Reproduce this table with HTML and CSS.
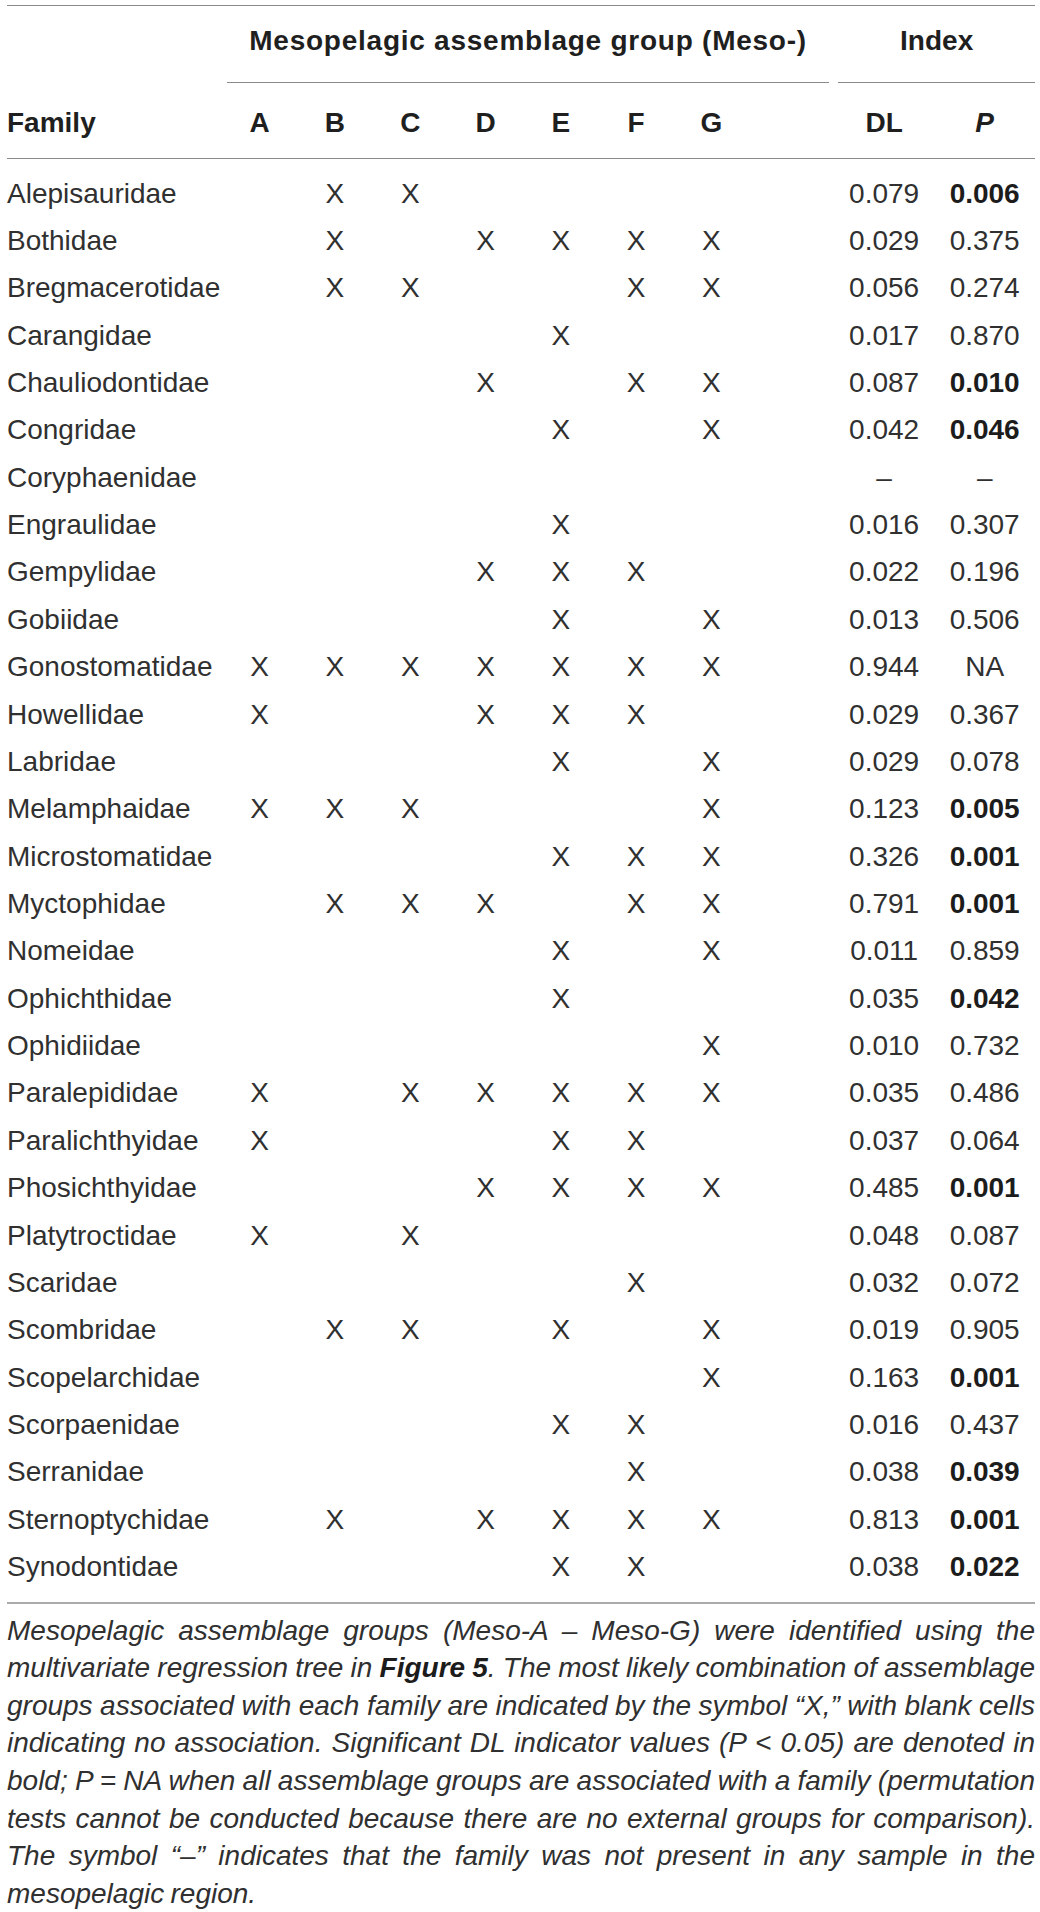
FILE: index.html
```html
<!DOCTYPE html>
<html lang="en">
<head>
<meta charset="utf-8">
<title>Mesopelagic assemblage groups</title>
<link rel="stylesheet" href="styles.css">
</head>
<body>
<div class="page">
<table class="fam-table">
  <colgroup>
    <col class="c-family">
    <col class="c-grp"><col class="c-grp"><col class="c-grp"><col class="c-grp"><col class="c-grp"><col class="c-grp"><col class="c-grp">
    <col class="c-gap">
    <col class="c-idx"><col class="c-idx2">
  </colgroup>
  <thead>
    <tr class="head-top">
      <th></th>
      <th colspan="8" class="span-head"><div class="span-line span-group">Mesopelagic assemblage group (Meso-)</div></th>
      <th colspan="2" class="span-head"><div class="span-line span-index">Index</div></th>
    </tr>
    <tr class="head-cols">
      <th class="left">Family</th>
      <th>A</th><th>B</th><th>C</th><th>D</th><th>E</th><th>F</th><th>G</th>
      <th></th>
      <th>DL</th><th><i>P</i></th>
    </tr>
  </thead>
  <tbody>
    <tr><td class="left">Alepisauridae</td><td></td><td>X</td><td>X</td><td></td><td></td><td></td><td></td><td></td><td>0.079</td><td><b>0.006</b></td></tr>
    <tr><td class="left">Bothidae</td><td></td><td>X</td><td></td><td>X</td><td>X</td><td>X</td><td>X</td><td></td><td>0.029</td><td>0.375</td></tr>
    <tr><td class="left">Bregmacerotidae</td><td></td><td>X</td><td>X</td><td></td><td></td><td>X</td><td>X</td><td></td><td>0.056</td><td>0.274</td></tr>
    <tr><td class="left">Carangidae</td><td></td><td></td><td></td><td></td><td>X</td><td></td><td></td><td></td><td>0.017</td><td>0.870</td></tr>
    <tr><td class="left">Chauliodontidae</td><td></td><td></td><td></td><td>X</td><td></td><td>X</td><td>X</td><td></td><td>0.087</td><td><b>0.010</b></td></tr>
    <tr><td class="left">Congridae</td><td></td><td></td><td></td><td></td><td>X</td><td></td><td>X</td><td></td><td>0.042</td><td><b>0.046</b></td></tr>
    <tr><td class="left">Coryphaenidae</td><td></td><td></td><td></td><td></td><td></td><td></td><td></td><td></td><td>–</td><td>–</td></tr>
    <tr><td class="left">Engraulidae</td><td></td><td></td><td></td><td></td><td>X</td><td></td><td></td><td></td><td>0.016</td><td>0.307</td></tr>
    <tr><td class="left">Gempylidae</td><td></td><td></td><td></td><td>X</td><td>X</td><td>X</td><td></td><td></td><td>0.022</td><td>0.196</td></tr>
    <tr><td class="left">Gobiidae</td><td></td><td></td><td></td><td></td><td>X</td><td></td><td>X</td><td></td><td>0.013</td><td>0.506</td></tr>
    <tr><td class="left">Gonostomatidae</td><td>X</td><td>X</td><td>X</td><td>X</td><td>X</td><td>X</td><td>X</td><td></td><td>0.944</td><td>NA</td></tr>
    <tr><td class="left">Howellidae</td><td>X</td><td></td><td></td><td>X</td><td>X</td><td>X</td><td></td><td></td><td>0.029</td><td>0.367</td></tr>
    <tr><td class="left">Labridae</td><td></td><td></td><td></td><td></td><td>X</td><td></td><td>X</td><td></td><td>0.029</td><td>0.078</td></tr>
    <tr><td class="left">Melamphaidae</td><td>X</td><td>X</td><td>X</td><td></td><td></td><td></td><td>X</td><td></td><td>0.123</td><td><b>0.005</b></td></tr>
    <tr><td class="left">Microstomatidae</td><td></td><td></td><td></td><td></td><td>X</td><td>X</td><td>X</td><td></td><td>0.326</td><td><b>0.001</b></td></tr>
    <tr><td class="left">Myctophidae</td><td></td><td>X</td><td>X</td><td>X</td><td></td><td>X</td><td>X</td><td></td><td>0.791</td><td><b>0.001</b></td></tr>
    <tr><td class="left">Nomeidae</td><td></td><td></td><td></td><td></td><td>X</td><td></td><td>X</td><td></td><td>0.011</td><td>0.859</td></tr>
    <tr><td class="left">Ophichthidae</td><td></td><td></td><td></td><td></td><td>X</td><td></td><td></td><td></td><td>0.035</td><td><b>0.042</b></td></tr>
    <tr><td class="left">Ophidiidae</td><td></td><td></td><td></td><td></td><td></td><td></td><td>X</td><td></td><td>0.010</td><td>0.732</td></tr>
    <tr><td class="left">Paralepididae</td><td>X</td><td></td><td>X</td><td>X</td><td>X</td><td>X</td><td>X</td><td></td><td>0.035</td><td>0.486</td></tr>
    <tr><td class="left">Paralichthyidae</td><td>X</td><td></td><td></td><td></td><td>X</td><td>X</td><td></td><td></td><td>0.037</td><td>0.064</td></tr>
    <tr><td class="left">Phosichthyidae</td><td></td><td></td><td></td><td>X</td><td>X</td><td>X</td><td>X</td><td></td><td>0.485</td><td><b>0.001</b></td></tr>
    <tr><td class="left">Platytroctidae</td><td>X</td><td></td><td>X</td><td></td><td></td><td></td><td></td><td></td><td>0.048</td><td>0.087</td></tr>
    <tr><td class="left">Scaridae</td><td></td><td></td><td></td><td></td><td></td><td>X</td><td></td><td></td><td>0.032</td><td>0.072</td></tr>
    <tr><td class="left">Scombridae</td><td></td><td>X</td><td>X</td><td></td><td>X</td><td></td><td>X</td><td></td><td>0.019</td><td>0.905</td></tr>
    <tr><td class="left">Scopelarchidae</td><td></td><td></td><td></td><td></td><td></td><td></td><td>X</td><td></td><td>0.163</td><td><b>0.001</b></td></tr>
    <tr><td class="left">Scorpaenidae</td><td></td><td></td><td></td><td></td><td>X</td><td>X</td><td></td><td></td><td>0.016</td><td>0.437</td></tr>
    <tr><td class="left">Serranidae</td><td></td><td></td><td></td><td></td><td></td><td>X</td><td></td><td></td><td>0.038</td><td><b>0.039</b></td></tr>
    <tr><td class="left">Sternoptychidae</td><td></td><td>X</td><td></td><td>X</td><td>X</td><td>X</td><td>X</td><td></td><td>0.813</td><td><b>0.001</b></td></tr>
    <tr><td class="left">Synodontidae</td><td></td><td></td><td></td><td></td><td>X</td><td>X</td><td></td><td></td><td>0.038</td><td><b>0.022</b></td></tr>
  </tbody>
</table>
<p class="caption">Mesopelagic assemblage groups (Meso-A – Meso-G) were identified using the multivariate regression tree in <b>Figure 5</b>. The most likely combination of assemblage groups associated with each family are indicated by the symbol “X,” with blank cells indicating no association. Significant DL indicator values (P &lt; 0.05) are denoted in bold; P = NA when all assemblage groups are associated with a family (permutation tests cannot be conducted because there are no external groups for comparison). The symbol “–” indicates that the family was not present in any sample in the mesopelagic region.</p>
</div>
</body>
</html>
```

FILE: styles.css
```css
html, body {
  margin: 0;
  padding: 0;
  background: #ffffff;
}

body {
  font-family: "Liberation Sans", Arial, sans-serif;
  color: #2e2e2e;
}

.page {
  width: 1028px;
  margin-left: 7px;
  padding-top: 5px;
}

.fam-table {
  width: 1028px;
  table-layout: fixed;
  border-collapse: separate;
  border-spacing: 0;
  border-top: 1px solid #8a8a8a;
  font-size: 28px;
}

.c-family { width: 215px; }
.c-grp { width: 75.3px; }
.c-gap { width: 85px; }
.c-idx { width: 100px; }
.c-idx2 { width: 101px; }

.fam-table th,
.fam-table td {
  padding: 0;
  text-align: center;
  white-space: nowrap;
}

.fam-table th {
  font-weight: bold;
  color: #1f1f1f;
}

.fam-table .left {
  text-align: left;
}

.head-top th {
  vertical-align: bottom;
}

.span-line {
  padding: 18px 0 24px;
  line-height: 34px;
  border-bottom: 1px solid #8a8a8a;
}

.span-group {
  margin: 0 5px;
  letter-spacing: 0.75px;
}

.span-index {
  margin-left: 4px;
}

.head-cols th {
  padding: 23px 0 18px;
  line-height: 34px;
  border-bottom: 1px solid #8a8a8a;
}

.fam-table td {
  line-height: 47.36px;
  height: 47.36px;
  color: #303030;
}

.fam-table td b {
  color: #1c1c1c;
}

.fam-table tbody tr:first-child td {
  padding-top: 10.6px;
}

.fam-table tbody tr:last-child td {
  padding-bottom: 11.3px;
  border-bottom: 2px solid #ababab;
}

.caption {
  margin: 8px 0 0;
  font-size: 28px;
  line-height: 37.6px;
  font-style: italic;
  text-align: justify;
  word-spacing: -1.5px;
  color: #303030;
}

.caption b {
  color: #1c1c1c;
}
```
